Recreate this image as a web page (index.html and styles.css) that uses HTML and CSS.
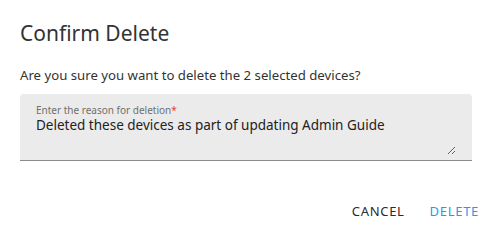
FILE: index.html
```html
<!DOCTYPE html>
<html>
<head>
<meta charset="utf-8">
<link rel="stylesheet" href="styles.css">
</head>
<body>
<div class="dialog">
  <h1 class="title">Confirm Delete</h1>
  <p class="message">Are you sure you want to delete the 2 selected devices?</p>
  <div class="field">
    <label class="label" for="reason">Enter the reason for deletion<span class="req">*</span></label>
    <textarea id="reason" class="input">Deleted these devices as part of updating Admin Guide</textarea>
  </div>
  <div class="actions">
    <button class="btn cancel">CANCEL</button>
    <button class="btn delete">DELETE</button>
  </div>
</div>
</body>
</html>
```

FILE: styles.css
```css
html, body {
  margin: 0;
  padding: 0;
  background: #fff;
}
body {
  font-family: "Noto Sans", "Liberation Sans", sans-serif;
  color: #2b2b2b;
}
.dialog {
  width: 494px;
  height: 237px;
  box-sizing: border-box;
  padding: 20px 15px 0 20px;
  display: flex;
  flex-direction: column;
}
.title {
  margin: 0;
  font-size: 21px;
  font-weight: 400;
  line-height: 26px;
  color: #333;
}
.message {
  margin: 20px 0 0;
  font-size: 13.2px;
  line-height: 18px;
  color: #333;
}
.field {
  margin-top: 10px;
  width: 452px;
  height: 67px;
  box-sizing: border-box;
  background: #ebebeb;
  border-bottom: 1px solid #8c8c8c;
  border-radius: 4px 4px 0 0;
  padding: 10px 16px 5px 16px;
  display: flex;
  flex-direction: column;
}
.label {
  font-size: 10px;
  line-height: 13px;
  color: #707070;
}
.req {
  color: #e8413a;
}
.input {
  flex: 1;
  margin: 0;
  padding: 0;
  border: 0;
  outline: none;
  background: transparent;
  font-family: inherit;
  font-size: 13.5px;
  line-height: 17px;
  color: #222;
  resize: vertical;
}
.actions {
  margin-top: 42px;
  display: flex;
  justify-content: flex-end;
  gap: 25px;
}
.btn {
  border: 0;
  background: none;
  padding: 0;
  font-family: inherit;
  font-size: 13px;
  letter-spacing: 0.7px;
  line-height: 16px;
  cursor: pointer;
}
.cancel { color: #2b2b2b; }
.delete { color: #1aa0e6; }
```
